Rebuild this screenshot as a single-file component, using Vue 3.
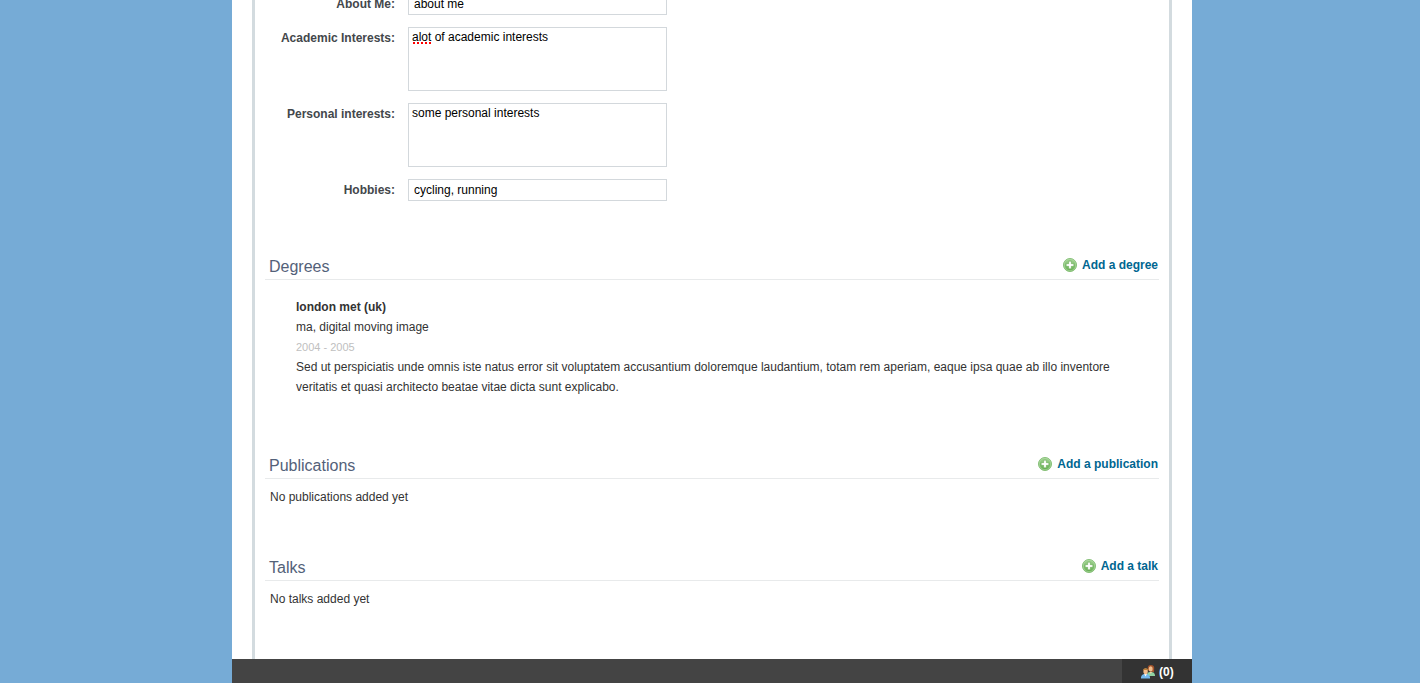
<script setup>
import { ref } from 'vue'

const about = ref('about me')
const academic = ref('alot of academic interests')
const personal = ref('some personal interests')
const hobbies = ref('cycling, running')

const sections = [
  {
    title: 'Degrees',
    action: 'Add a degree',
    entry: {
      name: 'london met (uk)',
      course: 'ma, digital moving image',
      years: '2004 - 2005',
      text: 'Sed ut perspiciatis unde omnis iste natus error sit voluptatem accusantium doloremque laudantium, totam rem aperiam, eaque ipsa quae ab illo inventore veritatis et quasi architecto beatae vitae dicta sunt explicabo.'
    }
  },
  { title: 'Publications', action: 'Add a publication', empty: 'No publications added yet' },
  { title: 'Talks', action: 'Add a talk', empty: 'No talks added yet' }
]
</script>

<template>
  <div class="page">
    <div class="sheet">
      <main class="panel">
        <form class="fields" @submit.prevent>
          <label for="about">About Me:</label>
          <input id="about" v-model="about" type="text">
          <label for="academic">Academic Interests:</label>
          <div class="spell">
            <textarea id="academic" v-model="academic" spellcheck="false"></textarea>
            <span class="typo"></span>
          </div>
          <label for="personal">Personal interests:</label>
          <textarea id="personal" v-model="personal" spellcheck="false"></textarea>
          <label for="hobbies">Hobbies:</label>
          <input id="hobbies" v-model="hobbies" type="text">
        </form>

        <section v-for="s in sections" :key="s.title">
          <header>
            <h2>{{ s.title }}</h2>
            <a href="#">
              <svg width="14" height="14" viewBox="0 0 14 14" aria-hidden="true">
                <defs>
                  <linearGradient :id="'g' + s.title" x1="0" y1="0" x2="0" y2="1">
                    <stop offset="0" stop-color="#a3d494" />
                    <stop offset="1" stop-color="#62ad4e" />
                  </linearGradient>
                </defs>
                <circle cx="7" cy="7" r="6.5" :fill="'url(#g' + s.title + ')'" stroke="#7cba6c" stroke-width=".9" />
                <circle cx="7" cy="7" r="5.700" fill="none" stroke="#b4dca9" stroke-width=".6" />
                <path d="M5.700 3.200h2.600v2.500h2.500v2.600H8.300v2.500H5.700V8.300H3.200V5.700h2.500z" fill="#fff" stroke="#5ea54c" stroke-width=".5" stroke-linejoin="round" />
              </svg>
              <span>{{ s.action }}</span>
            </a>
          </header>
          <div v-if="s.entry" class="entry">
            <h3>{{ s.entry.name }}</h3>
            <p>{{ s.entry.course }}</p>
            <p class="years">{{ s.entry.years }}</p>
            <p>{{ s.entry.text }}</p>
          </div>
          <p v-else class="empty">{{ s.empty }}</p>
        </section>
      </main>

      <footer class="bar">
        <button type="button" aria-label="Contacts online (0)">
          <svg width="14" height="14" viewBox="0 0 14 14" aria-hidden="true">
            <path d="M6 11V8.800q.8-1.600 2.800-1.800h2q2.600.3 3.200 2.800V11z" fill="#8fd3a2" />
            <path d="M6.800 5Q6 0 9.800 0t3.400 3.500L13 7h-2z" fill="#a3532b" />
            <ellipse cx="9.700" cy="4" rx="2" ry="2.700" fill="#f1bd8c" />
            <path d="M8.600 7h2.400L9.800 8.800z" fill="#f7d2aa" />
            <path d="M0 13.500V12q.5-2.500 3-2.900h3q2.600.4 3 2.900v1.500z" fill="#74b9ee" />
            <path d="M3.300 8.900h2.600L4.600 11.500z" fill="#fff" />
            <ellipse cx="4.600" cy="6.400" rx="2.200" ry="2.800" fill="#f3bc8b" />
            <path d="M2 6.200Q1.800 3.200 4.600 3.200T7.300 6L6.200 5H3z" fill="#b9803a" />
          </svg>
          <span>(0)</span>
        </button>
      </footer>
    </div>
  </div>
</template>

<style>
body { background: #76abd6; }
</style>

<style scoped>
.page {
  box-sizing: border-box;
  height: 100vh;
  padding-left: 4px;
  overflow: hidden;
  font: 12px/20px "Liberation Sans", Arial, sans-serif;
  color: #333;
  background: #76abd6;
}
.sheet {
  display: flex;
  flex-direction: column;
  box-sizing: border-box;
  max-width: 960px;
  height: 100%;
  margin: 0 auto;
  background: #fff;
}
.panel {
  flex: 1;
  min-height: 0;
  overflow: hidden;
  margin: 0 20px;
  padding: 0 10px;
  border: solid #d3dbdf;
  border-width: 0 3px;
}
.fields {
  display: grid;
  grid-template-columns: 130px 259px;
  gap: 12px 13px;
  margin: -7px 0 53px;
}
label {
  font-weight: bold;
  line-height: 22px;
  text-align: right;
  color: #43474b;
}
input, textarea {
  display: block;
  box-sizing: border-box;
  width: 100%;
  margin: 0;
  border: 1px solid #d3d8dc;
  border-radius: 0;
  background: #fff;
  color: #000;
  font: inherit;
  outline: none;
}
input { height: 22px; padding: 0 5px; }
textarea { height: 64px; padding: 2px 3px; line-height: 14px; resize: none; }
.spell { position: relative; }
.typo {
  position: absolute;
  left: 5px;
  top: 15px;
  width: 19px;
  height: 2px;
  background: repeating-linear-gradient(90deg, #f00 0 2px, transparent 2px 4px);
}
header {
  display: flex;
  align-items: center;
  justify-content: space-between;
  height: 25px;
  padding: 0 1px 0 4px;
  border-bottom: 1px solid #e8eaeb;
}
h2 {
  margin: 0;
  font-size: 16px;
  font-weight: normal;
  color: #536179;
}
a {
  display: flex;
  align-items: center;
  gap: 5px;
  padding-bottom: 4px;
  font-weight: bold;
  color: #006691;
  text-decoration: none;
}
h3, p { margin: 0; font-size: 12px; }
.entry { padding: 17px 31px 56px; }
.entry .years { font-size: 11px; color: #c0c0c0; }
.empty { padding: 8px 5px 48px; }
.bar {
  display: flex;
  flex: none;
  justify-content: flex-end;
  height: 24px;
  background: #444;
}
button {
  display: flex;
  align-items: center;
  gap: 4px;
  width: 70px;
  margin: 0;
  padding: 2px 0 0 19px;
  border: 0;
  background: #333;
  color: #fff;
  font: bold 12px/20px "Liberation Sans", Arial, sans-serif;
}
</style>
